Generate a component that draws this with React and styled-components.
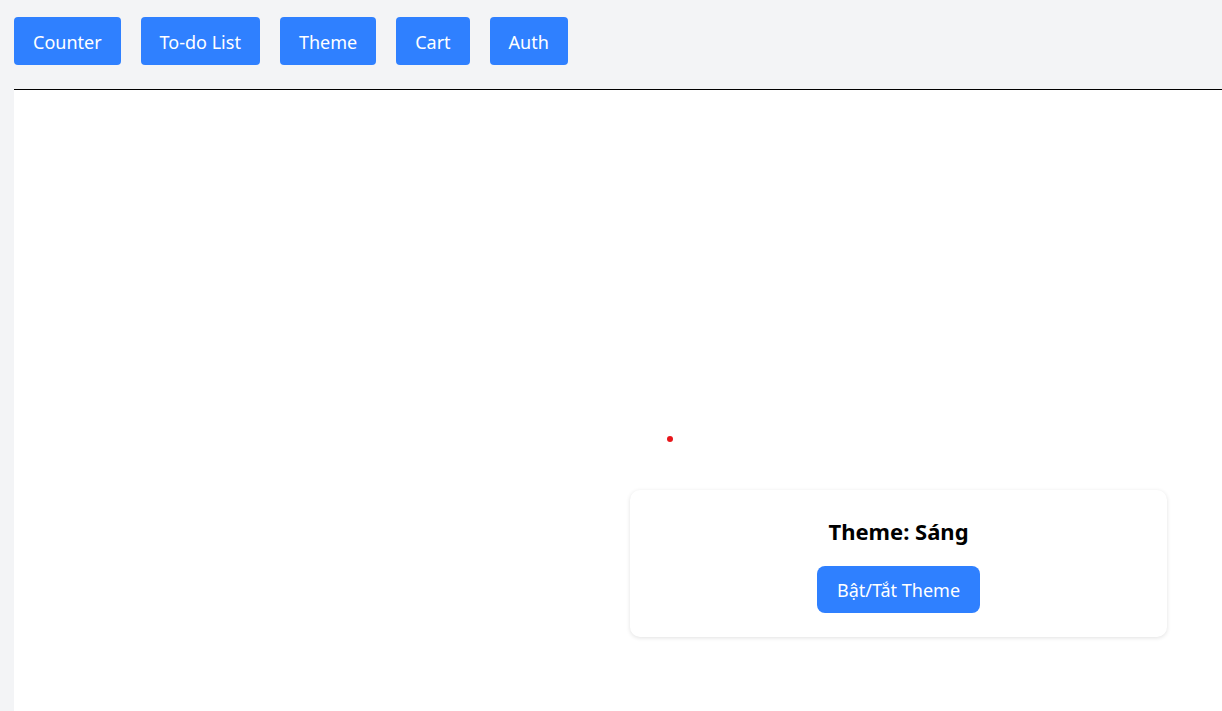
import styled, { createGlobalStyle } from "styled-components";

const GlobalStyle = createGlobalStyle`
    body {
        margin: 0;
        background-color: #F3F4F6;
        font-family: "Noto Sans", "Open Sans", sans-serif;
        overflow: hidden;
    }
`;

const tabs = ["Counter", "To-do List", "Theme", "Cart", "Auth"];

export default function App() {
    return (
        <>
            <GlobalStyle />
            <Page>
                <Nav>
                    {tabs.map((t) => (
                        <NavButton key={t}>{t}</NavButton>
                    ))}
                </Nav>
                <Main>
                    <Stage>
                        <Dot />
                        <Card>
                            <h2>Theme: Sáng</h2>
                            <ToggleButton>Bật/Tắt Theme</ToggleButton>
                        </Card>
                    </Stage>
                </Main>
            </Page>
        </>
    );
}

const Page = styled.div`
    min-height: 711px;
    display: flex;
    flex-direction: column;
`;

const Nav = styled.nav`
    display: flex;
    gap: 20px;
    padding: 17px 14px 24px;
`;

const Button = styled.button`
    border: none;
    background-color: #2F80FF;
    color: #FFFFFF;
    font-family: inherit;
    font-size: 18px;
    line-height: 24px;
    cursor: pointer;
`;

const NavButton = styled(Button)`
    height: 48px;
    padding: 13px 19px 11px;
    border-radius: 4px;
`;

const Main = styled.main`
    flex: 1;
    margin-left: 14px;
    background-color: #FFFFFF;
    border-top: 1px solid #000000;
`;

const Stage = styled.div`
    display: flex;
    flex-direction: column;
    padding: 346px 55px 0 616px;
`;

const Dot = styled.span`
    width: 6px;
    height: 6px;
    border-radius: 50%;
    background-color: #E8161B;
    margin: 0 0 48px 37px;
`;

const Card = styled.div`
    width: 537px;
    box-sizing: border-box;
    padding: 25px 24px 24px;
    background-color: #FFFFFF;
    border-radius: 10px;
    box-shadow: 0 1px 4px rgba(0, 0, 0, 0.12);
    display: flex;
    flex-direction: column;
    align-items: center;
    h2 {
        margin: 0 0 19px;
        font-size: 22px;
        line-height: 32px;
        font-weight: 700;
        color: #000000;
    }
`;

const ToggleButton = styled(Button)`
    height: 47px;
    padding: 12px 20px 11px;
    border-radius: 8px;
`;
